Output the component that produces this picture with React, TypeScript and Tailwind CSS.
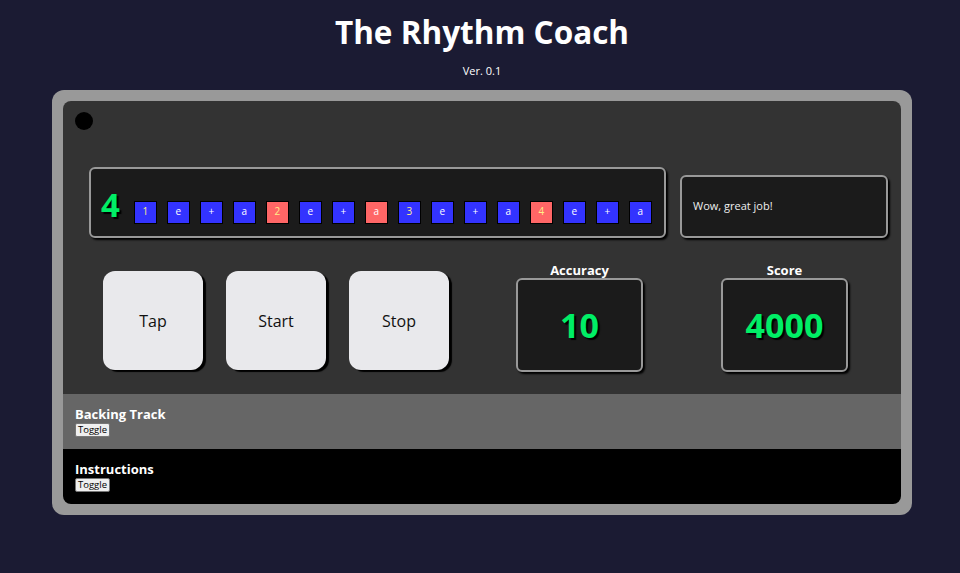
const beats = [
  { label: "1", accent: false, num: true },
  { label: "e", accent: false },
  { label: "+", accent: false },
  { label: "a", accent: false },
  { label: "2", accent: true, num: true },
  { label: "e", accent: false },
  { label: "+", accent: false },
  { label: "a", accent: true },
  { label: "3", accent: false, num: true },
  { label: "e", accent: false },
  { label: "+", accent: false },
  { label: "a", accent: false },
  { label: "4", accent: true, num: true },
  { label: "e", accent: false },
  { label: "+", accent: false },
  { label: "a", accent: false },
]

const PadButton = ({ label }: { label: string }) => (
  <button className="w-[100px] h-[99px] rounded-[12px] bg-[#e9e9ec] text-[16px] text-[#111] shadow-[3px_2px_1px_#000]">
    {label}
  </button>
)

const Stat = ({ title, value, className }: { title: string; value: string; className?: string }) => (
  <div className={"flex flex-col items-center " + (className ?? "")}>
    <div className="text-[13px] font-bold leading-[15px] text-white">{title}</div>
    <div className="w-[127px] h-[94px] rounded-[6px] border-2 border-[#999] bg-[#1b1b1b] shadow-[2px_2px_2px_#000] flex items-center justify-center">
      <span className="text-[34px] font-bold leading-none text-[#00ee66] [text-shadow:2px_2px_1px_#000]">{value}</span>
    </div>
  </div>
)

const Section = ({ title, className }: { title: string; className: string }) => (
  <div className={"h-[55px] px-[12px] pt-[12px] " + className}>
    <div className="text-[13px] font-bold leading-[17px] text-white">{title}</div>
    <button className="block h-[14px] px-[2px] text-[9.5px] leading-[12px] text-black bg-[#efefef] border border-[#767676] rounded-[2px]">
      Toggle
    </button>
  </div>
)

export default function App() {
  return (
    <div
      className="min-h-[573px] bg-[#1b1b33] text-white pt-[10px] pl-[4px]"
      style={{ fontFamily: '"Open Sans", "Noto Sans", sans-serif' }}
    >
      <h1 className="text-center text-[31.5px] font-bold leading-[44px]">The Rhythm Coach</h1>
      <div className="mt-[9px] text-center text-[11px] leading-[16px]">Ver. 0.1</div>

      <div className="mx-auto mt-[11px] w-[860px] rounded-[12px] bg-[#999] p-[11px]">
        <div className="rounded-[8px] overflow-hidden">
          <div className="bg-[#333] h-[293px] pt-[11px]">
            <div className="ml-[12px] w-[18px] h-[18px] rounded-full bg-black" />

            {/* beat row */}
            <div className="mt-[37px] ml-[26px] flex items-end gap-[14px]">
              <div className="w-[577px] h-[71px] rounded-[6px] border-2 border-[#999] bg-[#1b1b1b] shadow-[2px_2px_2px_#000] flex items-end pb-[12px] pl-[10px]">
                <span className="mb-[3px] mr-[14px] text-[33px] font-bold leading-none text-[#00ee66] [text-shadow:2px_2px_1px_#000]">4</span>
                <div className="flex gap-[10px]">
                  {beats.map((b, i) => (
                    <div
                      key={i}
                      className={
                        "w-[23px] h-[23px] pb-[3px] border border-black flex items-center justify-center text-[10px] leading-none " +
                        (b.accent ? "bg-[#ff6666] " : "bg-[#3333ff] ") +
                        (b.num ? "text-[#ffee88]" : "text-white")
                      }
                    >
                      {b.label}
                    </div>
                  ))}
                </div>
              </div>
              <div className="w-[208px] h-[63px] rounded-[6px] border-2 border-[#999] bg-[#1b1b1b] shadow-[2px_2px_2px_#000] flex items-center pl-[11px]">
                <span className="text-[11px] text-[#eee]">Wow, great job!</span>
              </div>
            </div>

            {/* controls row */}
            <div className="mt-[25px] ml-[40px] flex items-end">
              <div className="flex gap-[23px] mb-[2px]">
                <PadButton label="Tap" />
                <PadButton label="Start" />
                <PadButton label="Stop" />
              </div>
              <Stat title="Accuracy" value="10" className="ml-[67px]" />
              <Stat title="Score" value="4000" className="ml-[78px]" />
            </div>
          </div>

          <Section title="Backing Track" className="bg-[#666]" />
          <Section title="Instructions" className="bg-black" />
        </div>
      </div>
    </div>
  )
}
